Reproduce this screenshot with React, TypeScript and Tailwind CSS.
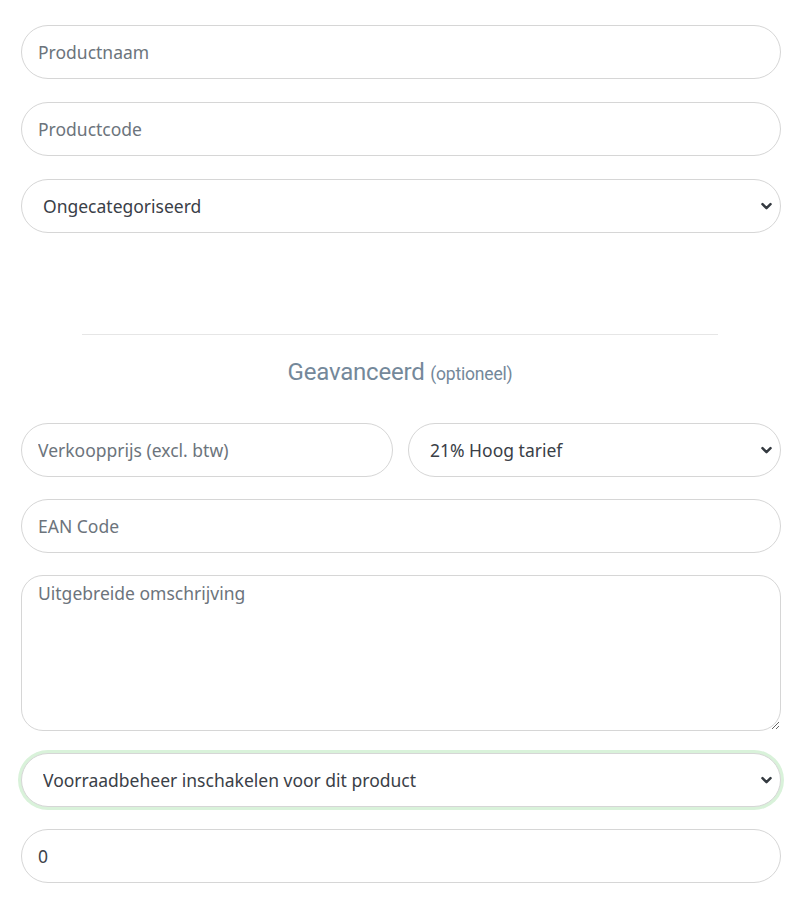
import React from 'react'

const field =
  'w-full h-[54px] rounded-full border border-[#d6d6d6] bg-white px-4 text-[17.5px] text-[#3d434a] placeholder:text-[#6c747c] outline-none'

function Select({ value, glow }: { value: string; glow?: boolean }) {
  return (
    <div className="relative">
      <select
        defaultValue={value}
        className={
          'w-full h-[54px] appearance-none rounded-full border border-[#d6d6d6] bg-white pl-[21px] pr-10 text-[17.5px] text-[#3a4047] outline-none ' +
          (glow ? 'shadow-[0_0_0_3px_#d9f2da]' : '')
        }
      >
        <option>{value}</option>
      </select>
      <svg
        className="pointer-events-none absolute right-[8px] top-1/2 -translate-y-1/2"
        width="13"
        height="13"
        viewBox="0 0 12 12"
      >
        <path d="M2.3 4.3 6 8l3.7-3.7" fill="none" stroke="#343a40" strokeWidth="2.3" strokeLinecap="round" strokeLinejoin="round" />
      </svg>
    </div>
  )
}

export default function App() {
  return (
    <main className="min-h-[901px] bg-white px-[21px] pt-[25px] pb-6 font-['Noto_Sans','Lato',sans-serif]">
      <div className="flex flex-col gap-[23px] w-[760px]">
        <input className={field} placeholder="Productnaam" />
        <input className={field} placeholder="Productcode" />
        <Select value="Ongecategoriseerd" />
      </div>

      <div className="mt-[101px] mx-auto w-[636px] border-t border-[#e6e6e6]" />
      <h2 className="mt-[22px] text-center text-[24px] leading-[30px] text-[#74889a] font-['Roboto',sans-serif] tracking-[-0.2px]">
        Geavanceerd <span className="text-[17.5px]">(optioneel)</span>
      </h2>

      <div className="mt-[34px] flex flex-col gap-[22px] w-[760px]">
        <div className="grid grid-cols-[372px_1fr] gap-[15px]">
          <input className={field} placeholder="Verkoopprijs (excl. btw)" />
          <Select value="21% Hoog tarief" />
        </div>
        <input className={field} placeholder="EAN Code" />
        <textarea
          className="w-full h-[156px] rounded-[22px] border border-[#d6d6d6] bg-white px-4 pt-[4px] text-[17.5px] text-[#3d434a] placeholder:text-[#6c747c] outline-none"
          placeholder="Uitgebreide omschrijving"
        />
        <Select value="Voorraadbeheer inschakelen voor dit product" glow />
        <input className={field} defaultValue="0" />
      </div>
    </main>
  )
}
